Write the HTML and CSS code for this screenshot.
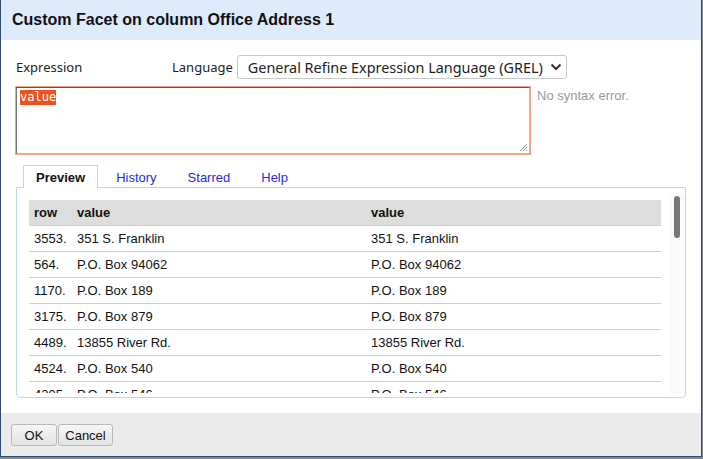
FILE: index.html
```html
<!DOCTYPE html>
<html>
<head>
<meta charset="utf-8">
<link rel="stylesheet" href="styles.css">
</head>
<body>
<div class="dialog">
  <div class="dlg-header">Custom Facet on column Office Address 1</div>
  <div class="dlg-body">
    <div class="expr-top">
      <span class="lbl expr-lbl">Expression</span>
      <span class="lbl lang-lbl">Language</span>
      <div class="select">
        <span>General Refine Expression Language (GREL)</span>
        <svg class="chev" width="12" height="8" viewBox="0 0 12 8"><path d="M1.5 1.5 L6 6 L10.5 1.5" fill="none" stroke="#333" stroke-width="2"/></svg>
      </div>
    </div>
    <div class="expr-row">
      <div class="textarea"><span class="sel">value</span>
        <svg class="grip" width="10" height="10" viewBox="0 0 10 10"><path d="M9 2 L2 9 M9 5 L5 9 M9 8 L8 9" stroke="#999" stroke-width="1"/></svg>
      </div>
      <div class="status">No syntax error.</div>
    </div>
    <div class="tabs">
      <span class="tab active">Preview</span>
      <span class="tab">History</span>
      <span class="tab">Starred</span>
      <span class="tab">Help</span>
    </div>
    <div class="panel">
      <div class="scroll">
        <table class="preview">
          <thead>
            <tr><th class="c-row">row</th><th class="c-v1">value</th><th>value</th></tr>
          </thead>
          <tbody>
            <tr><td>3553.</td><td>351 S. Franklin</td><td>351 S. Franklin</td></tr>
            <tr><td>564.</td><td>P.O. Box 94062</td><td>P.O. Box 94062</td></tr>
            <tr><td>1170.</td><td>P.O. Box 189</td><td>P.O. Box 189</td></tr>
            <tr><td>3175.</td><td>P.O. Box 879</td><td>P.O. Box 879</td></tr>
            <tr><td>4489.</td><td>13855 River Rd.</td><td>13855 River Rd.</td></tr>
            <tr><td>4524.</td><td>P.O. Box 540</td><td>P.O. Box 540</td></tr>
            <tr><td>4305.</td><td>P.O. Box 546</td><td>P.O. Box 546</td></tr>
            <tr><td>2210.</td><td>P.O. Box 110</td><td>P.O. Box 110</td></tr>
          </tbody>
        </table>
      </div>
      <div class="track"><div class="thumb"></div></div>
    </div>
  </div>
  <div class="dlg-footer">
    <button class="btn btn-ok">OK</button><button class="btn btn-cancel">Cancel</button>
  </div>
</div>
</body>
</html>
```
FILE: styles.css
```css
html, body {
  margin: 0;
  padding: 0;
}
body {
  background: #7d8894;
  width: 703px;
  height: 459px;
  overflow: hidden;
  font-family: "Liberation Sans", Arial, sans-serif;
  color: #222;
}
.dialog {
  width: 700px;
  height: 456px;
  background: #fff;
  border-left: 1px solid #2f4d6d;
  border-right: 1px solid #2f4d6d;
  border-bottom: 1px solid #2f4d6d;
  display: flex;
  flex-direction: column;
}
.dlg-header {
  height: 40px;
  background: #deebfd;
  display: flex;
  align-items: center;
  padding-left: 11px;
  font-weight: bold;
  font-size: 16px;
  color: #111;
}
.dlg-body {
  flex: 1;
  padding: 15px 15px 0 15px;
  display: flex;
  flex-direction: column;
}
.expr-top {
  display: flex;
  align-items: center;
  height: 24px;
}
.lbl {
  font-family: "Noto Sans", sans-serif;
  font-size: 13px;
  color: #222;
}
.expr-lbl {
  width: 156px;
}
.lang-lbl {
  margin-right: 4px;
}
.select {
  box-sizing: border-box;
  width: 330px;
  height: 24px;
  border: 1px solid #c8c8c8;
  border-radius: 3px;
  display: flex;
  align-items: center;
  padding-left: 10px;
  font-family: "Noto Sans", sans-serif;
  font-size: 14.4px;
  color: #222;
}
.chev {
  margin-left: 7px;
}
.expr-row {
  display: flex;
  margin-top: 8px;
}
.textarea {
  box-sizing: border-box;
  width: 514px;
  height: 67px;
  border-top: 1px solid #555;
  border-left: 1px solid #777;
  border-right: 1px solid #bbb;
  border-bottom: 1px solid #bbb;
  box-shadow: 0 0 0 1px #eea488;
  padding: 2px 3px;
  font-family: "DejaVu Sans Mono", monospace;
  font-size: 12px;
  line-height: 15px;
  display: flex;
  flex-direction: column;
  align-items: flex-start;
}
.sel {
  background: #e95420;
  color: #fff;
}
.grip {
  margin-top: auto;
  align-self: flex-end;
  margin-right: -2px;
  margin-bottom: -1px;
}
.status {
  margin-left: 7px;
  margin-top: 1px;
  font-size: 13px;
  color: #999;
}
.tabs {
  display: flex;
  margin-top: 11px;
  padding-left: 7px;
  height: 22px;
  position: relative;
  z-index: 1;
}
.tab {
  box-sizing: border-box;
  height: 23px;
  padding: 0 12px;
  margin-right: 5px;
  border: 1px solid transparent;
  border-bottom: none;
  display: flex;
  align-items: center;
  font-size: 13px;
  color: #2b2bdd;
}
.tab.active {
  border-color: #c4d2f4;
  background: #fff;
  color: #111;
  font-weight: bold;
  margin-right: 5px;
}
.panel {
  box-sizing: border-box;
  height: 211px;
  border: 1px solid #c4d2f4;
  border-radius: 0 0 4px 4px;
  display: flex;
  padding: 6px 0 4px 12px;
}
.scroll {
  flex: 1;
  overflow: hidden;
  padding-top: 6px;
  padding-right: 7px;
}
.track {
  width: 16px;
  background: #fafafa;
  padding-top: 2px;
  display: flex;
  justify-content: center;
}
.thumb {
  width: 6px;
  height: 42px;
  background: #787878;
  border-radius: 3px;
}
.preview {
  width: 632px;
  border-collapse: collapse;
  font-size: 13px;
  color: #111;
}
.preview th, .preview td {
  text-align: left;
  padding: 0 0 0 5px;
  height: 25px;
  border-bottom: 1px solid #cfcfcf;
  white-space: nowrap;
}
.preview th {
  background: #dddddd;
  font-weight: bold;
}
.c-row {
  width: 38px;
}
.c-v1 {
  width: 289px;
}
.dlg-footer {
  height: 43px;
  background: #ebebeb;
  box-sizing: border-box;
  padding: 11px 10px 0 10px;
  display: flex;
  align-items: flex-start;
}
.btn {
  height: 22px;
  box-sizing: border-box;
  border: 1px solid #b9b9b9;
  border-radius: 3px;
  background: linear-gradient(#f6f6f6, #e3e3e3);
  font-family: "Liberation Sans", Arial, sans-serif;
  font-size: 13px;
  color: #111;
  padding: 0;
  margin: 0 1px 0 0;
}
.btn-ok {
  width: 46px;
}
.btn-cancel {
  width: 55px;
}
```
